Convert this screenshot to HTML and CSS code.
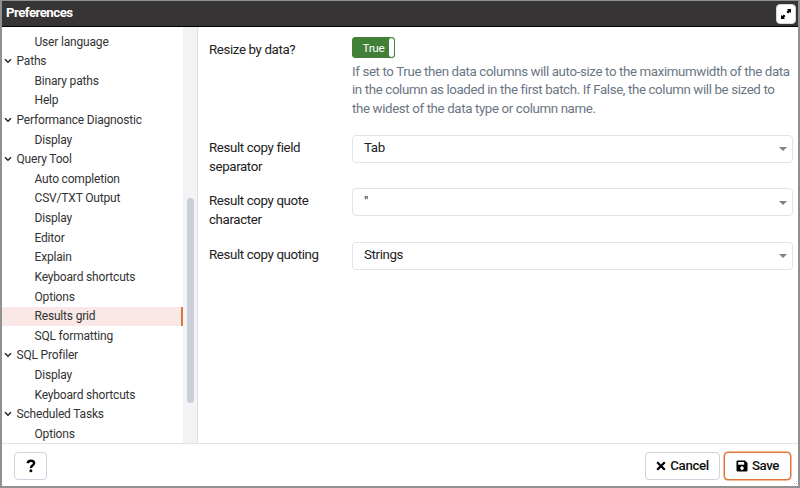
FILE: index.html
```html
<!DOCTYPE html>
<html lang="en">
<head>
<meta charset="utf-8">
<title>Preferences</title>
<link rel="stylesheet" href="styles.css">
</head>
<body>
<div class="dialog">
  <header class="titlebar">
    <h1 class="title">Preferences</h1>
    <button class="expand" aria-label="Maximize"><svg width="12" height="12" viewBox="0 0 12 12"><path d="M7 1h4v4L9.700 3.900 8.100 5.500 6.500 3.900 8.100 2.300zM5 11H1V7l1.300 1.100L3.900 6.500 5.500 8.100 3.900 9.700z"/></svg></button>
  </header>
  <main class="content">
    <nav class="sidebar">
      <ul class="tree">
        <li class="leaf">User language</li>
        <li class="group"><svg class="chevron" viewBox="0 0 8 6"><path d="M1 1.200l3 3 3-3"/></svg>Paths</li>
        <li class="leaf">Binary paths</li>
        <li class="leaf">Help</li>
        <li class="group"><svg class="chevron" viewBox="0 0 8 6"><path d="M1 1.200l3 3 3-3"/></svg>Performance Diagnostic</li>
        <li class="leaf">Display</li>
        <li class="group"><svg class="chevron" viewBox="0 0 8 6"><path d="M1 1.200l3 3 3-3"/></svg>Query Tool</li>
        <li class="leaf">Auto completion</li>
        <li class="leaf">CSV/TXT Output</li>
        <li class="leaf">Display</li>
        <li class="leaf">Editor</li>
        <li class="leaf">Explain</li>
        <li class="leaf">Keyboard shortcuts</li>
        <li class="leaf">Options</li>
        <li class="leaf selected">Results grid</li>
        <li class="leaf">SQL formatting</li>
        <li class="group"><svg class="chevron" viewBox="0 0 8 6"><path d="M1 1.200l3 3 3-3"/></svg>SQL Profiler</li>
        <li class="leaf">Display</li>
        <li class="leaf">Keyboard shortcuts</li>
        <li class="group"><svg class="chevron" viewBox="0 0 8 6"><path d="M1 1.200l3 3 3-3"/></svg>Scheduled Tasks</li>
        <li class="leaf">Options</li>
      </ul>
      <div class="scrollbar"><div class="thumb"></div></div>
    </nav>
    <section class="settings">
      <div class="row row-toggle">
        <div class="label">Resize by data?</div>
        <div class="control">
          <div class="toggle"><span class="toggle-on">True</span><span class="toggle-handle"></span></div>
          <p class="help">If set to True then data columns will auto-size to the maximumwidth of the data<br>in the column as loaded in the first batch. If False, the column will be sized to<br>the widest of the data type or column name.</p>
        </div>
      </div>
      <div class="row">
        <div class="label">Result copy field<br>separator</div>
        <div class="select"><span>Tab</span><i class="caret"></i></div>
      </div>
      <div class="row">
        <div class="label">Result copy quote<br>character</div>
        <div class="select"><span>"</span><i class="caret"></i></div>
      </div>
      <div class="row">
        <div class="label">Result copy quoting</div>
        <div class="select"><span>Strings</span><i class="caret"></i></div>
      </div>
    </section>
  </main>
  <footer class="footer">
    <button class="btn help-btn" aria-label="Help"><svg width="10" height="14" viewBox="0 0 10 13"><path class="question" d="M1.500 3.700C2.100 2 3.300 1.300 4.900 1.300c1.900 0 3.200 1 3.200 2.500C8.100 5.900 5 5.800 5 8.400"/><circle cx="4.900" cy="11.300" r="1.500"/></svg></button>
    <div class="actions">
      <button class="btn cancel"><svg width="10" height="10" viewBox="0 0 10 10"><path class="cross" d="M1.200 1.200l7.600 7.600M8.800 1.200L1.200 8.800"/></svg>Cancel</button>
      <button class="btn save"><svg width="12" height="12" viewBox="0 0 12 12"><path fill-rule="evenodd" d="M1.300 0.500H9L11.500 3v7.200q0 1.300-1.300 1.300H1.800Q0.500 11.500 0.500 10.200V1.500q0-1 .8-1zM2.200 2v2.800h6V2zM6 6.300a1.800 1.800 0 1 0 .01 0z"/></svg>Save</button>
    </div>
  </footer>
  <svg class="grip" viewBox="0 0 6 6"><path d="M4 1h1v1H4zM2 3h1v1H2zM4 3h1v1H4z"/></svg>
</div>
</body>
</html>
```
FILE: styles.css
```css
* { box-sizing: border-box; }

body {
  margin: 0;
  background: #909090;
  color: #222;
  font-family: Roboto, "Liberation Sans", sans-serif;
  font-size: 13px;
}

button { font-family: inherit; color: inherit; }

.dialog {
  position: relative;
  display: flex;
  flex-direction: column;
  height: 488px;
  border: 2px solid #909090;
  border-top-width: 1px;
  background: #fff;
}

.titlebar {
  display: flex;
  flex: none;
  align-items: center;
  justify-content: space-between;
  height: 26px;
  padding: 0 2px 0 4px;
  background: #363434;
  border-bottom: 1px solid #000;
}

.title {
  margin: 0 0 2px;
  color: #fff;
  font-size: 13.300px;
  font-weight: 700;
  letter-spacing: -0.550px;
}

.expand {
  display: flex;
  align-items: center;
  justify-content: center;
  width: 20px;
  height: 20px;
  padding: 0;
  background: #fff;
  border: 1px solid #d3d7e0;
  border-radius: 4px;
}

.content {
  display: flex;
  flex: 1;
  min-height: 0;
}

.sidebar {
  display: flex;
  flex: none;
  width: 196px;
  border-right: 1px solid #dde0e6;
}

.tree {
  flex: 1;
  margin: 0;
  padding: 5.300px 0 0;
  overflow: hidden;
  color: #333;
  list-style: none;
  font-size: 12px;
  letter-spacing: -0.180px;
}

.tree li {
  display: flex;
  align-items: center;
  height: 19.620px;
  padding-bottom: 1px;
  white-space: nowrap;
}

.leaf { padding-left: 32.500px; }
.group { padding-left: 2px; }

.selected {
  background: #f9e8e5;
  border-right: 2px solid #dd7637;
}

.chevron {
  flex: none;
  width: 8px;
  height: 6px;
  margin-right: 4.500px;
  fill: none;
  stroke: #222;
  stroke-width: 1.400;
}

.scrollbar {
  flex: none;
  width: 14px;
  padding: 170.500px 3px 0 4px;
  background: #f1f3f5;
}

.thumb {
  width: 7px;
  height: 205px;
  background: #c9ced8;
  border-radius: 4px;
}

.settings {
  flex: 1;
  padding: 9.500px 5px 0 11px;
  font-size: 13.300px;
  letter-spacing: -0.370px;
  line-height: 18.700px;
}

.row {
  display: grid;
  grid-template-columns: 143px 1fr;
  align-items: start;
  min-height: 53.600px;
}

.row-toggle { min-height: 98px; }

.label { padding-top: 4.400px; }

.toggle {
  display: flex;
  width: 43px;
  height: 21.500px;
  overflow: hidden;
  background: #428038;
  border: 1px solid #428038;
  border-radius: 3px;
}

.toggle-on {
  flex: 1;
  padding-left: 9.500px;
  color: #fff;
  font-size: 11.800px;
  line-height: 20px;
}

.toggle-handle {
  width: 5px;
  background: #fff;
  border-radius: 3px;
}

.help {
  margin: 4.500px 0 0;
  color: #6b7684;
  white-space: nowrap;
}

.select {
  display: flex;
  align-items: center;
  justify-content: space-between;
  height: 28px;
  padding: 0 5.500px 0 11px;
  border: 1px solid #e1e3ea;
  border-radius: 4px;
}

.caret {
  margin-top: 1px;
  border: 4px solid transparent;
  border-top: 4px solid #808080;
  border-bottom: 0;
}

.footer {
  display: flex;
  flex: none;
  align-items: center;
  justify-content: space-between;
  height: 43px;
  padding: 1px 7px 0 12px;
  border-top: 1px solid #e1e3ea;
}

.actions { display: flex; gap: 4px; }

.btn {
  display: flex;
  align-items: center;
  justify-content: center;
  height: 28px;
  padding: 0;
  gap: 4px;
  background: #fff;
  border: 1px solid #cfd3de;
  border-radius: 4px;
  color: #111;
  font-size: 13.300px;
  font-weight: 500;
  letter-spacing: -0.400px;
}

.help-btn { width: 33px; }
.cancel { width: 75px; }

.save {
  width: 67px;
  border: 1.500px solid #dd7637;
  box-shadow: 0 0 0 0.500px #dd7637;
}

.question { fill: none; stroke: #000; stroke-width: 2.400; }
.cross { fill: none; stroke: #000; stroke-width: 2.200; }

.grip {
  position: absolute;
  right: 0;
  bottom: 0;
  width: 6px;
  height: 6px;
  fill: #bbb;
}
```
